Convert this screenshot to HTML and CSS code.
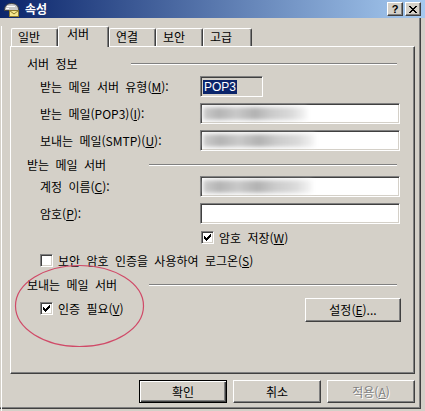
FILE: index.html
```html
<!DOCTYPE html>
<html lang="ko">
<head>
    <meta charset="UTF-8">
    <title>속성</title>
    <link rel="stylesheet" href="styles.css">
</head>
<body>
    <div id="window">
        <div class="titlebar">
            <svg class="app-icon" width="16" height="16" viewBox="0 0 16 16">
                <path d="M1.5 9.5 C1.5 5 4 2.5 8.5 2.5 C12.5 2.5 15.5 4.5 15.5 8.5 L15.5 9.5 Z" fill="#c8c8c8" stroke="#404040"/>
                <path d="M4 5.5 h8 M3 7.5 h3" stroke="#fff"/>
                <rect x="6.5" y="9.5" width="9" height="6" fill="#f4e58c" stroke="#8c7a2c"/>
                <path d="M6.5 9.5 L11 13 L15.5 9.5" fill="none" stroke="#8c7a2c"/>
            </svg>
            <span class="title">속성</span>
            <div class="caption-btns">
                <span class="cap-btn help">?</span>
                <span class="cap-btn">
                    <svg width="8" height="7" viewBox="0 0 8 7">
                        <path d="M0 0h2v1h-2z M6 0h2v1h-2z M1 1h2v1h-2z M5 1h2v1h-2z M2 2h4v1h-4z M3 3h2v1h-2z M2 4h4v1h-4z M1 5h2v1h-2z M5 5h2v1h-2z M0 6h2v1h-2z M6 6h2v1h-2z"/>
                    </svg>
                </span>
            </div>
        </div>

        <div class="client">
            <div class="tabs">
                <div class="tab">일반</div>
                <div class="tab selected">서버</div>
                <div class="tab">연결</div>
                <div class="tab">보안</div>
                <div class="tab last">고급</div>
            </div>

            <div class="panel">
                <div class="group-head first">
                    <span class="caption">서버 정보</span>
                    <span class="rule"></span>
                </div>
                <div class="row first">
                    <span class="label">받는 메일 서버 유형(<u>M</u>):</span>
                    <div class="field readonly"><span class="selected-text">POP3</span></div>
                </div>
                <div class="row">
                    <span class="label">받는 메일(POP3)(<u>I</u>):</span>
                    <div class="field"><span class="smudge" style="width: 104px"></span></div>
                </div>
                <div class="row">
                    <span class="label">보내는 메일(SMTP)(<u>U</u>):</span>
                    <div class="field"><span class="smudge" style="width: 112px"></span></div>
                </div>

                <div class="group-head second">
                    <span class="caption">받는 메일 서버</span>
                    <span class="rule"></span>
                </div>
                <div class="row tight">
                    <span class="label">계정 이름(<u>C</u>):</span>
                    <div class="field"><span class="smudge" style="width: 109px"></span></div>
                </div>
                <div class="row">
                    <span class="label">암호(<u>P</u>):</span>
                    <div class="field"></div>
                </div>
                <div class="check-row save-pw">
                    <span class="checkbox checked">
                        <svg width="9" height="9" viewBox="0 0 9 9">
                            <path d="M7 1h1v1h-1z M6 2h2v1h-2z M1 3h1v1h-1z M5 3h3v1h-3z M1 4h2v1h-2z M4 4h3v1h-3z M1 5h5v1h-5z M2 6h3v1h-3z M3 7h1v1h-1z"/>
                        </svg>
                    </span>
                    <span>암호 저장(<u>W</u>)</span>
                </div>
                <div class="check-row spa">
                    <span class="checkbox"></span>
                    <span>보안 암호 인증을 사용하여 로그온(<u>S</u>)</span>
                </div>

                <div class="group-head third">
                    <span class="caption">보내는 메일 서버</span>
                    <span class="rule"></span>
                </div>
                <div class="auth-row">
                    <div class="check-row">
                        <span class="checkbox checked">
                            <svg width="9" height="9" viewBox="0 0 9 9">
                                <path d="M7 1h1v1h-1z M6 2h2v1h-2z M1 3h1v1h-1z M5 3h3v1h-3z M1 4h2v1h-2z M4 4h3v1h-3z M1 5h5v1h-5z M2 6h3v1h-3z M3 7h1v1h-1z"/>
                            </svg>
                        </span>
                        <span>인증 필요(<u>V</u>)</span>
                    </div>
                    <button type="button" class="btn settings">설정(<u>E</u>)...</button>
                </div>
            </div>

            <div class="dialog-buttons">
                <button type="button" class="btn default">확인</button>
                <button type="button" class="btn">취소</button>
                <button type="button" class="btn disabled">적용(<u>A</u>)</button>
            </div>
        </div>
    </div>

    <svg class="mark" width="131" height="84" viewBox="0 0 131 84">
        <ellipse cx="65.5" cy="42" rx="64" ry="40.5" fill="none" stroke="#d04a68" stroke-width="1.2"/>
    </svg>
</body>
</html>
```

FILE: styles.css
```css
body {
    margin: 0;
    width: 425px;
    height: 411px;
    overflow: hidden;
    position: relative;
    background-color: #d4d0c8;
    font-family: "Noto Sans CJK KR", "Noto Sans", sans-serif;
    font-size: 12px;
    line-height: 14px;
    color: #000;
}

#window {
    width: 421px;
    height: 409px;
    box-sizing: border-box;
    border-right: 1px solid #404040;
    border-bottom: 1px solid #404040;
    box-shadow: inset -1px -1px #808080;
}

/* title bar */
.titlebar {
    width: 425px;
    height: 18px;
    display: flex;
    align-items: center;
    background: linear-gradient(to right, #0a246a, #a6caf0);
    color: #fff;
}

.app-icon {
    margin-left: 3px;
    flex-shrink: 0;
}

.title {
    margin-left: 6px;
    font-weight: bold;
    font-size: 12px;
}

.caption-btns {
    margin-left: auto;
    margin-right: 4px;
    display: flex;
    gap: 2px;
}

.cap-btn {
    box-sizing: border-box;
    width: 16px;
    height: 14px;
    display: flex;
    align-items: center;
    justify-content: center;
    background-color: #d4d0c8;
    border: 1px solid;
    border-color: #fff #404040 #404040 #fff;
    box-shadow: inset -1px -1px #808080;
    color: #000;
}

.cap-btn.help {
    font-family: "Liberation Sans", sans-serif;
    font-weight: bold;
    font-size: 11px;
    line-height: 12px;
}

/* client area */
.client {
    margin-left: 1px;
    border-left: 1px solid #fff;
    height: 390px;
}

.tabs {
    display: flex;
    align-items: flex-end;
    height: 20px;
    margin: 8px 0 0 9px;
}

.tab {
    box-sizing: border-box;
    width: 47px;
    height: 18px;
    padding-left: 6px;
    border: 1px solid #fff;
    border-bottom: none;
    border-right-color: #404040;
    border-radius: 2px 2px 0 0;
    box-shadow: inset -1px 0 #808080;
    line-height: 16px;
}

.tab.selected {
    width: 51px;
    height: 21px;
    margin-bottom: -1px;
    padding-left: 8px;
    line-height: 13px;
    position: relative;
    z-index: 1;
    background-color: #d4d0c8;
}

.tab.last {
    width: 49px;
}

.panel {
    width: 405px;
    height: 328px;
    box-sizing: border-box;
    margin-left: 8px;
    padding: 0 13px 0 16px;
    border: 1px solid #fff;
    border-right-color: #404040;
    border-bottom-color: #404040;
    box-shadow: inset -1px -1px #808080;
}

.group-head {
    display: flex;
    align-items: center;
    height: 14px;
    word-spacing: 3px;
}

.group-head .caption {
    width: 122px;
    flex-shrink: 0;
}

.group-head.first {
    margin-top: 10px;
}

.group-head.first .caption {
    width: 104px;
}

.group-head.second {
    margin-top: 7px;
}

.group-head.third {
    margin-top: 11px;
}

.rule {
    flex: 1;
    border-top: 1px solid #808080;
    border-bottom: 1px solid #fff;
    margin-right: 4px;
}

.row {
    display: flex;
    align-items: center;
    height: 21px;
    margin-top: 6px;
    padding-left: 13px;
}

.row.first {
    margin-top: 5px;
}

.row.tight {
    margin-top: 4px;
}

.label {
    width: 160px;
    flex-shrink: 0;
    word-spacing: 3px;
}

.field {
    box-sizing: border-box;
    width: 200px;
    height: 21px;
    display: flex;
    align-items: center;
    padding-left: 2px;
    background-color: #fff;
    border: 1px solid;
    border-color: #808080 #fff #fff #808080;
    box-shadow: inset 1px 1px #404040, inset -1px -1px #d4d0c8;
}

.field.readonly {
    width: 63px;
    background-color: #d4d0c8;
}

.selected-text {
    font-family: "Liberation Sans", sans-serif;
    background-color: #0a246a;
    color: #fff;
    padding: 0 1px;
    line-height: 14px;
}

.smudge {
    height: 13px;
    background: linear-gradient(90deg, #cdcdcd 0%, #b4b4b4 15%, #c9c9c9 32%, #b2b2b2 50%, #cbcbcb 66%, #dadada 85%, #f6f6f6 100%);
    filter: blur(2px);
}

.check-row {
    display: flex;
    align-items: center;
    gap: 5px;
    height: 13px;
    padding-left: 13px;
    word-spacing: 3px;
}

.check-row.save-pw {
    margin-top: 7px;
    padding-left: 174px;
}

.check-row.spa {
    margin-top: 10px;
}

.checkbox {
    box-sizing: border-box;
    width: 13px;
    height: 13px;
    flex-shrink: 0;
    padding: 1px;
    background-color: #fff;
    border: 1px solid;
    border-color: #808080 #fff #fff #808080;
    box-shadow: inset 1px 1px #404040, inset -1px -1px #d4d0c8;
}

.checkbox svg {
    display: block;
}

.auth-row {
    display: flex;
    align-items: flex-start;
    height: 24px;
    margin-top: 6px;
}

.auth-row .check-row {
    margin-top: 4px;
}

/* buttons */
.btn {
    box-sizing: border-box;
    width: 88px;
    height: 23px;
    padding: 0;
    display: flex;
    align-items: center;
    justify-content: center;
    font: inherit;
    color: #000;
    background-color: #d4d0c8;
    border: 1px solid;
    border-color: #fff #404040 #404040 #fff;
    box-shadow: inset -1px -1px #808080;
    border-radius: 0;
}

.btn.settings {
    width: 96px;
    height: 24px;
    margin-left: auto;
}

.btn.default {
    border-color: #000;
    box-shadow: inset 1px 1px #fff, inset -1px -1px #404040, inset -2px -2px #808080;
}

.btn.disabled {
    color: #808080;
    text-shadow: 1px 1px #fff;
}

.dialog-buttons {
    display: flex;
    justify-content: flex-end;
    gap: 6px;
    width: 413px;
    margin-top: 6px;
}

/* red circle drawn over the screenshot */
.mark {
    position: absolute;
    left: 14px;
    top: 264px;
}
```
